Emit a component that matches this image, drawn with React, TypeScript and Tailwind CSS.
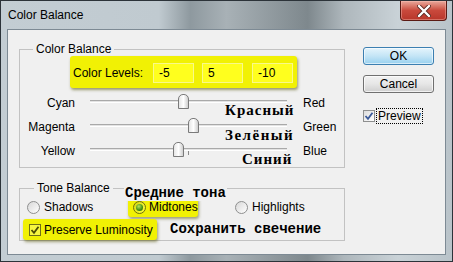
import React from "react";

const ui = { fontFamily: '"Liberation Sans", Arial, sans-serif' };
const serif = { fontFamily: '"Liberation Serif", "DejaVu Serif", serif' };
const mono = { fontFamily: '"Liberation Mono", "DejaVu Sans Mono", monospace' };

function Thumb({ value }: { value: number }) {
  const left = 98.5 + value * 0.985 - 5.5;
  return (
    <div
      className="absolute top-[-7px] w-[11px] h-[15px] rounded-t-[5px] border border-[#7a7a7a] bg-gradient-to-r from-[#e6e6e6] via-white to-[#cfcfcf]"
      style={{ left }}
    />
  );
}

function SliderRow({ left, right, value }: { left: string; right: string; value: number }) {
  return (
    <div className="flex h-[24px]">
      <div className="w-[55px] text-right text-[12px] pt-[3px] leading-[18px] whitespace-nowrap">{left}</div>
      <div className="relative ml-[15px] w-[197px] mt-[9px] h-[3px] border-t border-[#a9a9a9] border-b border-b-white bg-[#e3e3e3]">
        <div className="absolute left-[98px] top-[2px] w-px h-[4px] bg-[#888]" />
        <Thumb value={value} />
      </div>
      <div className="ml-[16px] text-[12px] pt-[3px] leading-[18px]">{right}</div>
    </div>
  );
}

function Radio({ checked, yellow }: { checked?: boolean; yellow?: boolean }) {
  return (
    <div
      className={
        "w-[13px] h-[13px] rounded-full border flex items-center justify-center shrink-0 " +
        (yellow
          ? "border-[#6d6d10] bg-gradient-to-br from-[#d6d600] to-[#ffff40]"
          : "border-[#8e8f8f] bg-gradient-to-br from-[#d8d8d8] to-white")
      }
    >
      {checked && <div className="w-[7px] h-[7px] rounded-full bg-[radial-gradient(circle_at_40%_35%,#b8e060,#3f8f10_60%,#1f5a08)]" />}
    </div>
  );
}

function Check({ yellow }: { yellow?: boolean }) {
  return (
    <div
      className={
        "w-[12px] h-[12px] border flex items-center justify-center shrink-0 " +
        (yellow ? "border-[#6f6f1a] bg-[#f6f640]" : "border-[#8e8f8f] bg-gradient-to-br from-[#dcdcdc] to-white")
      }
    >
      <svg width="10" height="10" viewBox="0 0 10 10">
        <path
          d="M1.5 5 L4 7.8 L8.5 1.8"
          fill="none"
          stroke={yellow ? "#4a4a05" : "#3b5a9a"}
          strokeWidth="1.8"
        />
      </svg>
    </div>
  );
}

export default function App() {
  return (
    <div
      className="w-[453px] h-[262px] flex flex-col border border-[#2c3339] bg-[linear-gradient(90deg,#c3cdd3_0%,#c0cad0_35%,#8e999f_42%,#a8b1b6_50%,#7e888d_68%,#aeb7bc_76%,#c9d2d7_88%,#b9c3c9_100%)] overflow-hidden whitespace-nowrap"
      style={ui}
    >
      <div className="h-[28px] flex shrink-0">
        <span className="ml-[7px] mt-[6px] text-[12px] leading-[16px] text-black">Color Balance</span>
        <div className="ml-auto mr-[5px] w-[47px] h-[20px] rounded-b-[4px] border border-t-0 border-[#5a1a14] bg-gradient-to-b from-[#e8a89c] via-[#c9493c] to-[#b8362a] flex items-center justify-center shadow-[inset_0_0_0_1px_rgba(255,200,190,0.4)]">
          <svg width="14" height="12" viewBox="0 0 14 12">
            <path d="M2 1 L12 11 M12 1 L2 11" stroke="#5a2a24" strokeWidth="4" strokeLinecap="round" />
            <path d="M2 1 L12 11 M12 1 L2 11" stroke="#ffffff" strokeWidth="2.4" strokeLinecap="round" />
          </svg>
        </div>
      </div>

      <div className="flex-1 mx-[6px] mb-[6px] border border-[#7d8a94] bg-[#f0f0f0] flex text-black">
        <div className="pl-[11px] pt-[12px] flex flex-col">
          <fieldset className="relative w-[326px] border border-[#c2c2c2] pb-[4px]">
            <legend className="ml-[13px] px-[3px] text-[12px] leading-[14px]">Color Balance</legend>
            <div className="ml-[50px] w-[227px] h-[32px] rounded-[3px] bg-[#f1f104] shadow-[1px_2px_3px_rgba(80,80,0,0.55)] flex items-center pl-[3px] pt-[2px]">
              <span className="text-[12px]">Color Levels:</span>
              <div className="ml-[10px] w-[41px] h-[20px] border border-[#f9f98a] bg-[#ffff1e] text-[12px] leading-[18px] pl-[5px]">-5</div>
              <div className="ml-[8px] w-[41px] h-[20px] border border-[#f9f98a] bg-[#ffff1e] text-[12px] leading-[18px] pl-[5px]">5</div>
              <div className="ml-[9px] w-[41px] h-[20px] border border-[#f9f98a] bg-[#ffff1e] text-[12px] leading-[18px] pl-[5px]">-10</div>
            </div>
            <div className="mt-[3px] flex flex-col">
              <SliderRow left="Cyan" right="Red" value={-5} />
              <SliderRow left="Magenta" right="Green" value={5} />
              <SliderRow left="Yellow" right="Blue" value={-10} />
            </div>
            <span className="absolute left-[205px] top-[46px] text-[15px] leading-[16px] font-bold tracking-[1px]" style={serif}>Красный</span>
            <span className="absolute left-[205px] top-[71px] text-[15px] leading-[16px] font-bold tracking-[1.5px]" style={serif}>Зелёный</span>
            <span className="absolute left-[222px] top-[95px] text-[15px] leading-[16px] font-bold tracking-[1px]" style={serif}>Синий</span>
          </fieldset>

          <fieldset className="relative mt-[13px] w-[326px] border border-[#c2c2c2]">
            <legend className="ml-[14px] px-[3px] text-[12px] leading-[14px]">Tone Balance</legend>
            <span className="absolute left-[104px] top-[-9px] px-[1px] bg-[#f0f0f0] text-[14px] leading-[15px] font-bold" style={mono}>Средние тона</span>
            <div className="mt-[2px] h-[20px] flex items-center">
              <div className="w-[108px] flex items-center pl-[7px]">
                <Radio />
                <span className="ml-[4px] text-[12px]">Shadows</span>
              </div>
              <div className="w-[70px] h-[20px] rounded-[3px] bg-[#f1f104] shadow-[1px_2px_3px_rgba(80,80,0,0.5)] flex items-center pl-[5px]">
                <Radio checked yellow />
                <span className="ml-[3px] text-[12px]">Midtones</span>
              </div>
              <div className="ml-[37px] flex items-center">
                <Radio />
                <span className="ml-[4px] text-[12px]">Highlights</span>
              </div>
            </div>
            <div className="mt-[2px] h-[21px] flex items-center">
              <div className="ml-[3px] w-[134px] h-[21px] rounded-[3px] bg-[#f1f104] shadow-[1px_2px_3px_rgba(80,80,0,0.5)] flex items-center pl-[6px]">
                <Check yellow />
                <span className="ml-[3px] text-[12px]">Preserve Luminosity</span>
              </div>
              <span className="ml-[13px] text-[14px] leading-[15px] font-bold" style={mono}>Сохранить свечение</span>
            </div>
          </fieldset>
        </div>

        <div className="ml-[18px] pt-[17px] flex flex-col">
          <div className="w-[71px] h-[18px] rounded-[3px] border border-[#3c7fb1] bg-gradient-to-b from-[#e5f4fc] via-[#c4e5f6] to-[#98d1ef] text-[12px] leading-[16px] text-center shadow-[inset_0_0_0_1px_rgba(255,255,255,0.6)]">OK</div>
          <div className="mt-[10px] w-[71px] h-[18px] rounded-[3px] border border-[#707070] bg-gradient-to-b from-[#f2f2f2] via-[#e6e6e6] to-[#cfcfcf] text-[12px] leading-[16px] text-center shadow-[inset_0_0_0_1px_rgba(255,255,255,0.7)]">Cancel</div>
          <div className="mt-[15px] flex items-center">
            <Check />
            <span className="ml-[1px] px-[1px] border border-dotted border-black text-[12px] leading-[14px]">Preview</span>
          </div>
        </div>
      </div>
    </div>
  );
}
